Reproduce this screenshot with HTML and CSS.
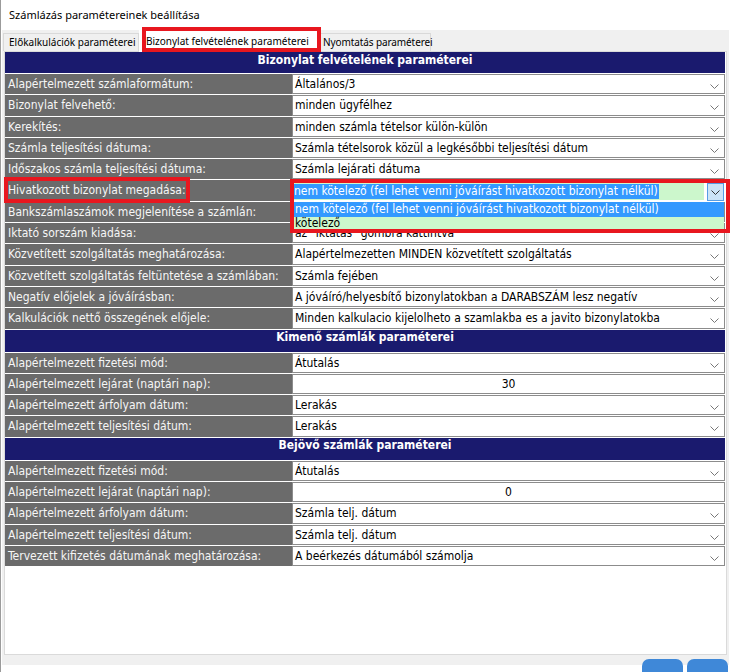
FILE: index.html
```html
<!DOCTYPE html>
<html lang="hu">
<head>
<meta charset="utf-8">
<title>Számlázás paramétereinek beállítása</title>
<link rel="stylesheet" href="styles.css">
</head>
<body>
<div class="window">
  <div class="title">Számlázás paramétereinek beállítása</div>
  <div class="tabctl">
    <div class="tabs">
      <div class="tab t1">Előkalkulációk paraméterei</div>
      <div class="tab active">Bizonylat felvételének paraméterei</div>
      <div class="tab t3">Nyomtatás paraméterei</div>
    </div>
    <div class="panel">
      <div class="grid">
        <div class="head first">Bizonylat felvételének paraméterei</div>
        <div class="row"><div class="lbl">Alapértelmezett számlaformátum:</div><div class="val dd">Általános/3</div></div>
        <div class="row"><div class="lbl">Bizonylat felvehető:</div><div class="val dd">minden ügyfélhez</div></div>
        <div class="row"><div class="lbl">Kerekítés:</div><div class="val dd">minden számla tételsor külön-külön</div></div>
        <div class="row"><div class="lbl">Számla teljesítési dátuma:</div><div class="val dd">Számla tételsorok közül a legkésőbbi teljesítési dátum</div></div>
        <div class="row"><div class="lbl">Időszakos számla teljesítési dátuma:</div><div class="val dd">Számla lejárati dátuma</div></div>
        <div class="row"><div class="lbl">Hivatkozott bizonylat megadása:</div>
          <div class="val open">
            <div class="combo">
              <div class="edit"><span class="sel">nem kötelező (fel lehet venni jóváírást hivatkozott bizonylat nélkül)</span></div>
              <div class="btn"><svg width="9" height="5" viewBox="0 0 9 5"><polyline points="0.5,0.5 4.5,4.5 8.5,0.5" fill="none" stroke="#333" stroke-width="1"/></svg></div>
            </div>
            <div class="list">
              <div class="opt hi">nem kötelező (fel lehet venni jóváírást hivatkozott bizonylat nélkül)</div>
              <div class="opt">kötelező</div>
            </div>
          </div>
        </div>
        <div class="row"><div class="lbl">Bankszámlaszámok megjelenítése a számlán:</div><div class="val dd"></div></div>
        <div class="row"><div class="lbl">Iktató sorszám kiadása:</div><div class="val dd">az "iktatás" gombra kattintva</div></div>
        <div class="row"><div class="lbl">Közvetített szolgáltatás meghatározása:</div><div class="val dd">Alapértelmezetten MINDEN közvetített szolgáltatás</div></div>
        <div class="row"><div class="lbl">Közvetített szolgáltatás feltüntetése a számlában:</div><div class="val dd">Számla fejében</div></div>
        <div class="row"><div class="lbl">Negatív előjelek a jóváírásban:</div><div class="val dd">A jóváíró/helyesbítő bizonylatokban a DARABSZÁM lesz negatív</div></div>
        <div class="row"><div class="lbl">Kalkulációk nettő összegének előjele:</div><div class="val dd">Minden kalkulacio kijelolheto a szamlakba es a javito bizonylatokba</div></div>
        <div class="head">Kimenő számlák paraméterei</div>
        <div class="row"><div class="lbl">Alapértelmezett fizetési mód:</div><div class="val dd">Átutalás</div></div>
        <div class="row"><div class="lbl">Alapértelmezett lejárat (naptári nap):</div><div class="val num">30</div></div>
        <div class="row"><div class="lbl">Alapértelmezett árfolyam dátum:</div><div class="val dd">Lerakás</div></div>
        <div class="row"><div class="lbl">Alapértelmezett teljesítési dátum:</div><div class="val dd">Lerakás</div></div>
        <div class="head">Bejövő számlák paraméterei</div>
        <div class="row"><div class="lbl">Alapértelmezett fizetési mód:</div><div class="val dd">Átutalás</div></div>
        <div class="row"><div class="lbl">Alapértelmezett lejárat (naptári nap):</div><div class="val num">0</div></div>
        <div class="row"><div class="lbl">Alapértelmezett árfolyam dátum:</div><div class="val dd">Számla telj. dátum</div></div>
        <div class="row"><div class="lbl">Alapértelmezett teljesítési dátum:</div><div class="val dd">Számla telj. dátum</div></div>
        <div class="row"><div class="lbl">Tervezett kifizetés dátumának meghatározása:</div><div class="val dd">A beérkezés dátumából számolja</div></div>
      </div>
    </div>
    <div class="buttons">
      <div class="bbtn"></div>
      <div class="bbtn"></div>
    </div>
  </div>
</div>
<div class="mark mark-tab"></div>
<div class="mark mark-label"></div>
<div class="mark mark-combo"></div>
</body>
</html>
```
FILE: styles.css
```css
html, body {
  margin: 0;
  padding: 0;
  background: #fff;
  overflow: hidden;
}
body {
  width: 735px;
  height: 672px;
  position: relative;
}
.window {
  height: 672px;
  border-left: 1px solid #9b9b9b;
  box-sizing: border-box;
}
.title {
  height: 30px;
  line-height: 30px;
  padding-left: 8px;
  font-family: "Noto Sans", "Liberation Sans", sans-serif;
  font-size: 11px;
  color: #000;
}
.tabctl {
  margin-left: 1px;
  width: 727px;
  height: 635px;
  background: #f0f0f0;
}
.tabs {
  height: 21px;
  display: flex;
  align-items: flex-end;
  padding-left: 1px;
  font-family: "Noto Sans", "Liberation Sans", sans-serif;
  font-size: 10px;
  color: #000;
}
.tab {
  height: 18px;
  line-height: 17px;
  box-sizing: border-box;
  border: 1px solid #d9d9d9;
  border-bottom: none;
  background: #f0f0f0;
  padding-left: 5px;
  white-space: nowrap;
}
.t1 { width: 136px; }
.active {
  width: 181px;
  height: 22px;
  margin-bottom: -1px;
  background: #fff;
  border-color: #fff;
  padding-left: 6px;
  line-height: 20px;
  position: relative;
  z-index: 1;
}
.t3 { width: 111px; padding-left: 2px; letter-spacing: -0.1px; }
.panel {
  margin-left: 2px;
  width: 723px;
  height: 604px;
  box-sizing: border-box;
  border: 1px solid #dadada;
  background: #fff;
}
.grid {
  width: 720px;
  display: flex;
  flex-direction: column;
  gap: 1px;
  font-family: "DejaVu Sans Condensed", "DejaVu Sans", sans-serif;
  font-stretch: condensed;
  font-size: 12px;
}
.head {
  height: 22px;
  background: #1a1a6e;
  color: #fff;
  font-size: 12px;
  font-weight: bold;
  text-align: center;
  line-height: 15px;
  padding-top: 0;
  box-sizing: border-box;
}
.head.first {
  height: 21px;
  padding-top: 1px;
}
.row {
  height: 20.3px;
  display: grid;
  grid-template-columns: 287px 433px;
}
.lbl {
  background: #6b6b6b;
  color: #f6f6f6;
  padding-left: 3px;
  line-height: 20px;
  white-space: nowrap;
  overflow: hidden;
}
.val {
  position: relative;
  border: 1px solid #8c8c8c;
  background: #fff;
  color: #000;
  padding-left: 2px;
  line-height: 18px;
  white-space: nowrap;
  box-sizing: border-box;
}
.dd::after {
  content: "";
  position: absolute;
  right: 5px;
  top: 9px;
  width: 9px;
  height: 5px;
  background: url("data:image/svg+xml;utf8,<svg xmlns='http://www.w3.org/2000/svg' width='9' height='5' viewBox='0 0 9 5'><polyline points='0.5,0.5 4.5,4.5 8.5,0.5' fill='none' stroke='%23777' stroke-width='1'/></svg>") no-repeat;
}
.num {
  text-align: center;
  padding-left: 0;
}
.open {
  border: none;
  padding-left: 0;
  z-index: 2;
}
.combo {
  display: flex;
  height: 18px;
  margin-top: 3px;
  margin-left: 1px;
}
.edit {
  width: 411px;
  height: 17px;
  background: #ccf7cc;
  line-height: 16px;
  overflow: hidden;
}
.sel {
  background: #3399ff;
  color: #fff;
  padding: 0 1px 1px 1px;
}
.btn {
  margin-left: 3px;
  width: 17px;
  height: 18px;
  box-sizing: border-box;
  background: #cce4f7;
  border: 1px solid #569de5;
  display: flex;
  align-items: center;
  justify-content: center;
}
.list {
  position: absolute;
  left: 1px;
  top: 22px;
  width: 431px;
  background: #ccf7cc;
}
.opt {
  height: 13.5px;
  line-height: 13px;
  padding-left: 2px;
  color: #000;
}
.opt.hi {
  height: 14.5px;
  line-height: 14px;
  background: #3399ff;
  color: #fff;
}
.buttons {
  display: flex;
  justify-content: flex-end;
  gap: 4px;
  padding-right: 1px;
  margin-top: 4px;
}
.bbtn {
  width: 41px;
  height: 20px;
  border-radius: 7px 7px 0 0;
  background: #3f88d8;
}
.mark {
  position: absolute;
  box-sizing: border-box;
  border: 4px solid #e8171f;
  z-index: 10;
}
.mark-tab {
  left: 142px;
  top: 27px;
  width: 179px;
  height: 25px;
}
.mark-label {
  left: 4px;
  top: 177px;
  width: 186px;
  height: 26px;
}
.mark-combo {
  left: 290px;
  top: 179px;
  width: 440px;
  height: 54px;
}
```
